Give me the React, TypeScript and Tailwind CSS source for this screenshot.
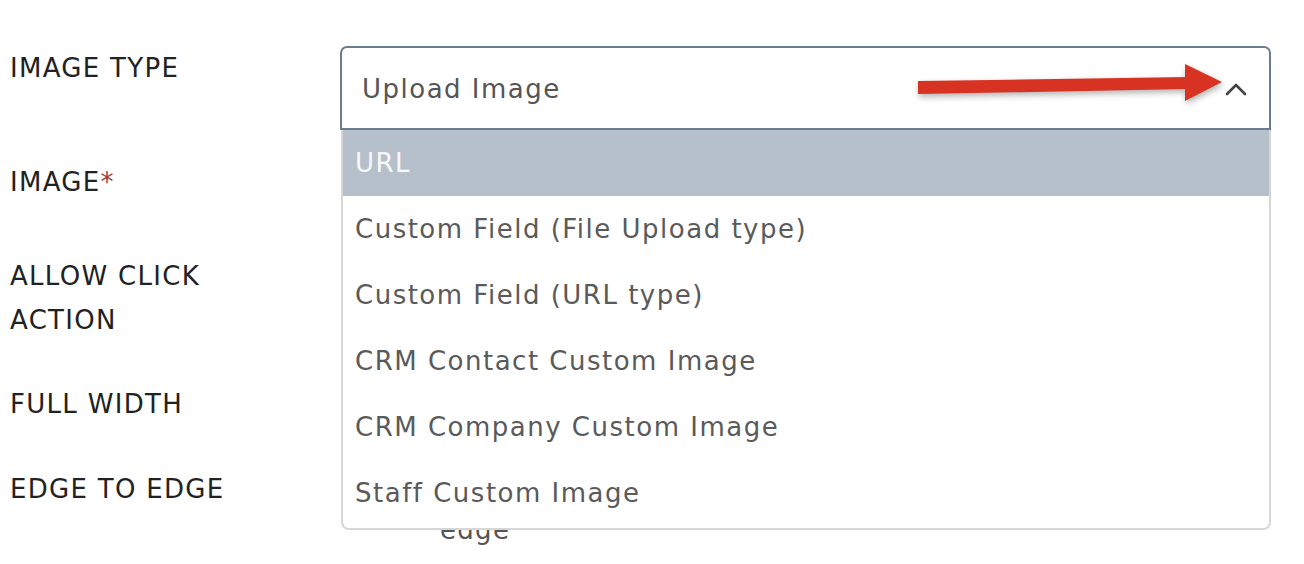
const font = { fontFamily: '"DejaVu Sans", "Liberation Sans", sans-serif' }

const options = [
  'URL',
  'Custom Field (File Upload type)',
  'Custom Field (URL type)',
  'CRM Contact Custom Image',
  'CRM Company Custom Image',
  'Staff Custom Image',
]

function Label({ children }: { children: React.ReactNode }) {
  return (
    <div className="w-[340px] shrink-0 pl-[10px] text-[26px] leading-[44px] tracking-[1.3px] text-[#222]">
      {children}
    </div>
  )
}

function ImageTypeSelect() {
  return (
    <div className="relative w-[931px]">
      <div className="flex h-[84px] items-center justify-between rounded-t-[7px] border-2 border-[#6b7c91] bg-white pl-[20px] pr-[22px] pt-[3px]">
        <span className="text-[26px] tracking-[1.5px] text-[#555]">Upload Image</span>
        <svg width="22" height="14" viewBox="0 0 22 14" className="mt-[-2px]">
          <polyline points="2,12 11,3 20,12" fill="none" stroke="#444" strokeWidth="2.6" strokeLinecap="round" strokeLinejoin="round" />
        </svg>
      </div>
      <div className="absolute left-[1px] top-full z-10 w-[930px] overflow-hidden rounded-b-[8px] border-2 border-t-0 border-[#d6d6d6] bg-white pb-[2px]">
        {options.map((o, i) => (
          <div
            key={o}
            className={
              i === 0
                ? 'flex h-[66px] items-center bg-[#b6c0ca] pl-[12px] pt-[1px] text-[26px] tracking-[1.5px] text-[#f7f8f9]'
                : 'flex h-[66px] items-center pl-[12px] pt-[1px] text-[26px] tracking-[1.5px] text-[#5a5a5a]'
            }
          >
            {o}
          </div>
        ))}
      </div>
      <svg
        className="pointer-events-none absolute left-[576px] top-[16px] z-20"
        width="310"
        height="50"
        viewBox="0 0 310 50"
        style={{ filter: 'drop-shadow(1px 3px 3px rgba(0,0,0,0.3))' }}
      >
        <polygon points="2,19 272,15 272,27 2,32" fill="#d73222" />
        <polygon points="269,2 306,20 269,39" fill="#d73222" />
      </svg>
    </div>
  )
}

export default function App() {
  return (
    <div className="h-[564px] w-[1304px] overflow-hidden bg-white" style={font}>
      <div className="flex flex-col pt-[46px]">
        <div className="flex items-start">
          <Label>IMAGE TYPE</Label>
          <ImageTypeSelect />
        </div>
        <div className="mt-[30px] flex">
          <Label>
            IMAGE<span className="text-[#a33a3a]">*</span>
          </Label>
        </div>
        <div className="mt-[50px] flex">
          <Label>
            ALLOW CLICK
            <br />
            ACTION
          </Label>
        </div>
        <div className="mt-[40px] flex">
          <Label>FULL WIDTH</Label>
        </div>
        <div className="mt-[41px] flex items-start">
          <Label>EDGE TO EDGE</Label>
          <div className="mt-[45px] pl-[100px] text-[26px] leading-[36px] tracking-[1.3px] text-[#555]">
            edge
          </div>
        </div>
      </div>
    </div>
  )
}
